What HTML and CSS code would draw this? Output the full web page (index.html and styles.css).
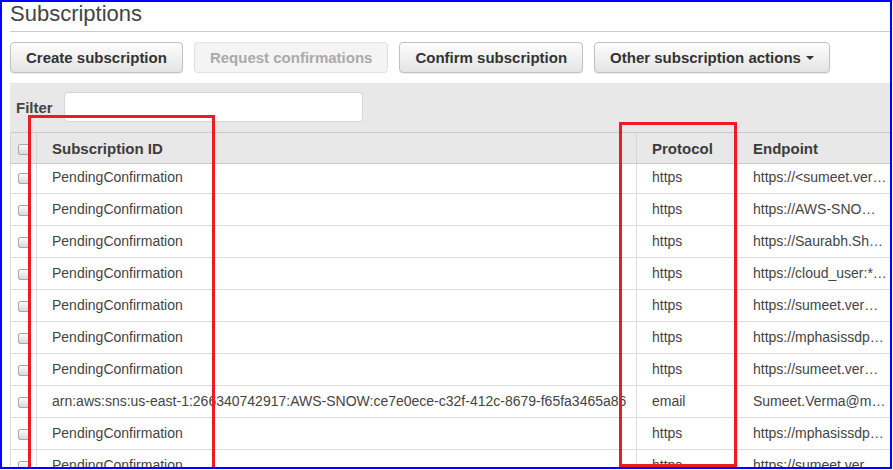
FILE: index.html
```html
<!DOCTYPE html>
<html lang="en">
<head>
    <meta charset="UTF-8">
    <meta name="viewport" content="width=device-width, initial-scale=1.0">
    <title>Subscriptions</title>
    <link rel="stylesheet" href="styles.css">
</head>
<body>
    <div class="frame">
        <h1 class="page-title">Subscriptions</h1>

        <div class="toolbar">
            <button class="btn">Create subscription</button>
            <button class="btn" disabled>Request confirmations</button>
            <button class="btn">Confirm subscription</button>
            <button class="btn">Other subscription actions <span class="caret"></span></button>
        </div>

        <div class="panel">
            <div class="filter-row">
                <label class="filter-label" for="filter">Filter</label>
                <input type="text" id="filter" class="filter-input">
            </div>

            <table class="subs">
                <colgroup>
                    <col class="col-cb">
                    <col class="col-id">
                    <col class="col-proto">
                    <col>
                </colgroup>
                <thead>
                    <tr>
                        <th class="cb-cell"><span class="cb"></span></th>
                        <th>Subscription ID</th>
                        <th>Protocol</th>
                        <th>Endpoint</th>
                    </tr>
                </thead>
                <tbody>
                    <tr class="first">
                        <td class="cb-cell"><span class="cb"></span></td>
                        <td>PendingConfirmation</td>
                        <td>https</td>
                        <td>https://&lt;sumeet.ver…</td>
                    </tr>
                    <tr>
                        <td class="cb-cell"><span class="cb"></span></td>
                        <td>PendingConfirmation</td>
                        <td>https</td>
                        <td>https://AWS-SNO…</td>
                    </tr>
                    <tr>
                        <td class="cb-cell"><span class="cb"></span></td>
                        <td>PendingConfirmation</td>
                        <td>https</td>
                        <td>https://Saurabh.Sh…</td>
                    </tr>
                    <tr>
                        <td class="cb-cell"><span class="cb"></span></td>
                        <td>PendingConfirmation</td>
                        <td>https</td>
                        <td>https://cloud_user:*…</td>
                    </tr>
                    <tr>
                        <td class="cb-cell"><span class="cb"></span></td>
                        <td>PendingConfirmation</td>
                        <td>https</td>
                        <td>https://sumeet.ver…</td>
                    </tr>
                    <tr>
                        <td class="cb-cell"><span class="cb"></span></td>
                        <td>PendingConfirmation</td>
                        <td>https</td>
                        <td>https://mphasissdp…</td>
                    </tr>
                    <tr>
                        <td class="cb-cell"><span class="cb"></span></td>
                        <td>PendingConfirmation</td>
                        <td>https</td>
                        <td>https://sumeet.ver…</td>
                    </tr>
                    <tr>
                        <td class="cb-cell"><span class="cb"></span></td>
                        <td>arn:aws:sns:us-east-1:266340742917:AWS-SNOW:ce7e0ece-c32f-412c-8679-f65fa3465a86</td>
                        <td>email</td>
                        <td>Sumeet.Verma@m…</td>
                    </tr>
                    <tr>
                        <td class="cb-cell"><span class="cb"></span></td>
                        <td>PendingConfirmation</td>
                        <td>https</td>
                        <td>https://mphasissdp…</td>
                    </tr>
                    <tr>
                        <td class="cb-cell"><span class="cb"></span></td>
                        <td>PendingConfirmation</td>
                        <td>https</td>
                        <td>https://sumeet.ver…</td>
                    </tr>
                </tbody>
            </table>
        </div>

        <!-- highlight boxes drawn over the table -->
        <div class="mark mark-id"></div>
        <div class="mark mark-proto"></div>
    </div>
</body>
</html>
```

FILE: styles.css
```css
body {
    margin: 0;
    padding: 0;
    background: #fff;
    font-family: "Liberation Sans", Arial, sans-serif;
    color: #444;
}
.frame {
    position: relative;
    width: 892px;
    height: 469px;
    box-sizing: border-box;
    border: 2px solid #0000ff;
    padding-left: 8px;
    overflow: hidden;
}
.page-title {
    margin: 0;
    font-size: 22px;
    line-height: 22px;
    font-weight: normal;
    color: #444;
    padding-top: 1px;
    padding-bottom: 6px;
    border-bottom: 1px solid #ccc;
}
.toolbar {
    display: flex;
    gap: 11px;
    margin-top: 10px;
}
.btn {
    height: 31px;
    padding: 0 15px;
    font-family: "Liberation Sans", Arial, sans-serif;
    font-size: 15px;
    font-weight: bold;
    color: #333;
    background: linear-gradient(#fdfdfd, #e4e4e4);
    border: 1px solid #c2c2c2;
    border-radius: 4px;
    box-shadow: 0 1px 1px rgba(0, 0, 0, 0.08);
    cursor: pointer;
}
.btn:disabled {
    color: #aaa;
    background: #f4f4f4;
    border-color: #e0e0e0;
    box-shadow: none;
}
.caret {
    display: inline-block;
    width: 0;
    height: 0;
    margin-left: 1px;
    vertical-align: 3px;
    border-left: 4px solid transparent;
    border-right: 4px solid transparent;
    border-top: 4px solid #333;
}
.panel {
    margin-top: 10px;
    background: #e8e8e8;
    padding-top: 9px;
}
.filter-row {
    display: flex;
    align-items: center;
    padding-left: 6px;
}
.filter-label {
    width: 48px;
    font-size: 15px;
    font-weight: bold;
    color: #444;
}
.filter-input {
    width: 299px;
    height: 30px;
    box-sizing: border-box;
    border: 1px solid #d6d6d6;
    border-radius: 4px;
    background: #fff;
    margin: 0;
}
.subs {
    width: 100%;
    margin-top: 10px;
    table-layout: fixed;
    border-collapse: collapse;
    border-top: 1px solid #c8c8c8;
    border-left: 1px solid #d0d0d0;
}
.col-cb {
    width: 26px;
}
.col-id {
    width: 600px;
}
.col-proto {
    width: 101px;
}
.subs th {
    background: #e8e8e8;
    text-align: left;
    font-size: 15px;
    font-weight: bold;
    color: #3c3c3c;
    line-height: 28px;
    padding: 2px 2px 0 15px;
    border-left: 1px solid #d6d6d6;
    border-bottom: 1px solid #cacaca;
    white-space: nowrap;
    overflow: hidden;
}
.subs td {
    background: #fff;
    font-size: 14px;
    line-height: 31px;
    padding: 0 2px 0 15px;
    border-left: 1px solid #dcdcdc;
    border-bottom: 1px solid #dcdcdc;
    white-space: nowrap;
    overflow: hidden;
}
.subs tr.first td {
    line-height: 27px;
    padding-bottom: 2px;
}
.subs .cb-cell {
    padding: 0 0 0 7px;
}
.subs tr.first .cb-cell {
    padding: 0 0 2px 7px;
}
.cb {
    display: inline-block;
    width: 12px;
    height: 11px;
    box-sizing: border-box;
    border: 1px solid #a8a8a8;
    border-radius: 2px;
    background: linear-gradient(#fbfbfb, #d8d8d8);
    vertical-align: middle;
}
.subs th .cb {
    vertical-align: -2px;
}
.mark {
    position: absolute;
    box-sizing: border-box;
    border: 3px solid #ed1c24;
}
.mark-id {
    left: 26px;
    top: 113px;
    width: 187px;
    height: 400px;
}
.mark-proto {
    left: 617px;
    top: 120px;
    width: 118px;
    height: 345px;
}
```
